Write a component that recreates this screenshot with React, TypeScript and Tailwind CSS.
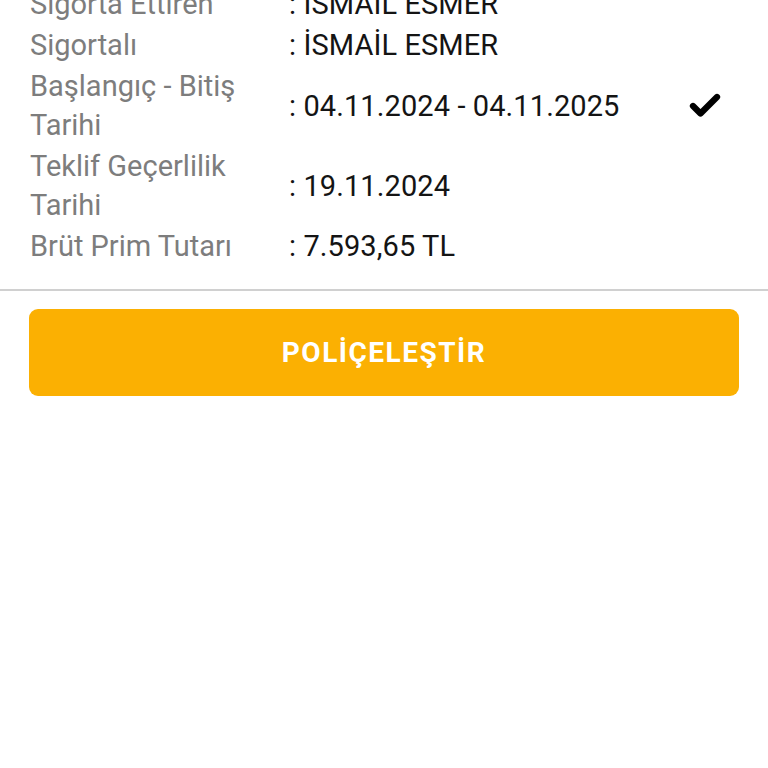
import { Check } from 'lucide-react';

const rows: { label: string[]; value: string; check?: boolean }[] = [
  { label: ['Sigorta Ettiren'], value: ': İSMAİL ESMER' },
  { label: ['Sigortalı'], value: ': İSMAİL ESMER' },
  { label: ['Başlangıç - Bitiş', 'Tarihi'], value: ': 04.11.2024 - 04.11.2025', check: true },
  { label: ['Teklif Geçerlilik', 'Tarihi'], value: ': 19.11.2024' },
  { label: ['Brüt Prim Tutarı'], value: ': 7.593,65 TL' },
];

export default function App() {
  return (
    <div className="w-[768px] h-[768px] overflow-hidden bg-white" style={{ fontFamily: 'Roboto, "Noto Sans", sans-serif' }}>
      <div className="-mt-[15px] pl-[30px] pr-[45px] pb-[23px] flex flex-col gap-[2px]">
        {rows.map((row, i) => (
          <div key={i} className="flex items-center text-[29px] leading-[39px]">
            <div className="w-[259px] shrink-0 text-[#7d7d7d]">
              {row.label.map((l) => (
                <div key={l}>{l}</div>
              ))}
            </div>
            <div className="flex-1 text-[#141414] tracking-[0.1px]">{row.value}</div>
            {row.check && <Check size={36} strokeWidth={4.2} className="text-black" />}
          </div>
        ))}
      </div>
      <div className="h-[2px] bg-[#d0d0d0]" />
      <div className="px-[29px] pt-[18px]">
        <button className="w-full h-[87px] rounded-[9px] bg-[#fbb002] text-white text-[28px] font-bold tracking-[1.5px]">
          POLİÇELEŞTİR
        </button>
      </div>
    </div>
  );
}
